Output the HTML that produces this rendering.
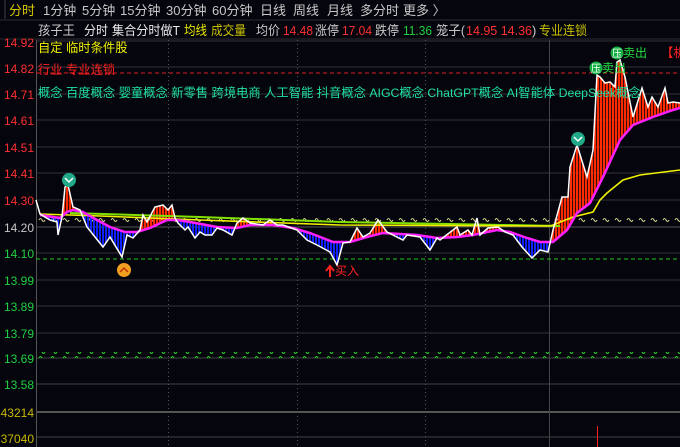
<!DOCTYPE html>
<html><head><meta charset="utf-8"><style>
html,body{margin:0;padding:0;background:#05050d;width:680px;height:447px;overflow:hidden}
svg{display:block}
text{font-family:"Liberation Sans","Noto Sans CJK SC",sans-serif}
</style></head><body>
<svg width="680" height="447" viewBox="0 0 680 447" xmlns="http://www.w3.org/2000/svg">
<defs>
<pattern id="rs" width="3" height="10" patternUnits="userSpaceOnUse"><rect width="2.2" height="10" fill="#ff2a00"/></pattern>
<pattern id="bs" width="3" height="10" patternUnits="userSpaceOnUse"><rect width="2" height="10" fill="#1020ff"/></pattern>
<pattern id="tY" x="38" y="0" width="12" height="6" patternUnits="userSpaceOnUse"><path d="M1,4 q1.5,-3 3,0 q1.5,3 3,0" stroke="#d8d890" stroke-width="1" fill="none"/></pattern>
<pattern id="tG" x="38" y="0" width="12" height="6" patternUnits="userSpaceOnUse"><path d="M1,4 q1.5,-3 3,0 q1.5,3 3,0" stroke="#20e020" stroke-width="1" fill="none"/></pattern>
<clipPath id="up"><polygon points="36,0 36,215 40,215 60,218 67,212 73,210 83,212 97,220 110,227 125,232 137,232 150,228 167,220 177,220 190,222 217,227 237,228 250,225 273,225 293,228 310,233 333,242 350,242 367,237 383,233 417,235 437,238 457,237 473,235 497,230 510,232 527,238 540,242 553,242 567,230 577,213 590,203 603,177 620,140 633,125 653,117 673,110 680,108 680,0"/></clipPath>
<clipPath id="dn"><polygon points="36,447 36,215 40,215 60,218 67,212 73,210 83,212 97,220 110,227 125,232 137,232 150,228 167,220 177,220 190,222 217,227 237,228 250,225 273,225 293,228 310,233 333,242 350,242 367,237 383,233 417,235 437,238 457,237 473,235 497,230 510,232 527,238 540,242 553,242 567,230 577,213 590,203 603,177 620,140 633,125 653,117 673,110 680,108 680,447"/></clipPath>
<polygon id="area" points="36,200 40,214 50,220 57,222 58,235 62,217 65,187 68,185 73,207 80,210 87,227 103,247 110,237 122,257 127,235 133,238 140,230 143,215 147,222 155,207 163,205 168,210 172,205 175,218 178,223 185,230 188,227 195,238 200,232 205,235 212,235 217,228 223,230 232,235 237,223 243,218 250,223 263,225 270,220 277,225 283,225 297,230 307,240 317,245 330,252 337,265 343,243 350,242 357,228 363,237 370,233 378,220 387,232 403,240 407,235 420,237 430,250 437,238 440,240 457,227 460,235 468,230 472,235 477,218 480,235 488,228 498,227 505,232 513,235 522,247 532,258 540,250 548,252 553,230 562,197 568,197 570,167 577,145 587,177 593,150 597,75 600,77 605,83 610,82 615,87 617,62 620,60 625,77 633,117 642,88 648,107 652,97 658,107 665,88 668,103 673,102 680,103 680,108 673,110 653,117 633,125 620,140 603,177 590,203 577,213 567,230 553,242 540,242 527,238 510,232 497,230 473,235 457,237 437,238 417,235 383,233 367,237 350,242 333,242 310,233 293,228 273,225 250,225 237,228 217,227 190,222 177,220 167,220 150,228 137,232 125,232 110,227 97,220 83,212 73,210 67,212 60,218 40,215"/>
</defs>
<!-- top tabs -->
<line x1="5" y1="0" x2="5" y2="19" stroke="#444"/>
<line x1="0" y1="20" x2="680" y2="20" stroke="#2a2a30"/>
<g font-size="13" fill="#c8c8c8">
<text x="9" y="15" fill="#d8c800">分时</text>
<text x="43" y="15">1分钟</text><text x="82" y="15">5分钟</text><text x="120" y="15">15分钟</text><text x="166" y="15">30分钟</text><text x="212" y="15">60分钟</text><text x="260" y="15">日线</text><text x="293" y="15">周线</text><text x="327" y="15">月线</text><text x="360" y="15">多分时</text><text x="403" y="15">更多 〉</text>
</g>
<!-- header -->
<g font-size="13" lengthAdjust="spacingAndGlyphs">
<text x="38" y="35" fill="#c8c8c8" textLength="37" lengthAdjust="spacingAndGlyphs">孩子王</text>
<text x="84" y="35" fill="#e8e8e8" textLength="24" lengthAdjust="spacingAndGlyphs">分时</text>
<text x="112" y="35" fill="#e8e8e8" textLength="68" lengthAdjust="spacingAndGlyphs">集合分时做T</text>
<text x="184" y="35" fill="#e8e800" textLength="23" lengthAdjust="spacingAndGlyphs">均线</text>
<text x="211" y="35" fill="#c8c000" textLength="35" lengthAdjust="spacingAndGlyphs">成交量</text>
<text x="256" y="35" fill="#c8c8c8" textLength="24" lengthAdjust="spacingAndGlyphs">均价</text>
<text x="283" y="35" fill="#ff3030" textLength="30" lengthAdjust="spacingAndGlyphs">14.48</text>
<text x="315" y="35" fill="#c8c8c8" textLength="24" lengthAdjust="spacingAndGlyphs">涨停</text>
<text x="342" y="35" fill="#ff3030" textLength="30" lengthAdjust="spacingAndGlyphs">17.04</text>
<text x="375" y="35" fill="#c8c8c8" textLength="24" lengthAdjust="spacingAndGlyphs">跌停</text>
<text x="403" y="35" fill="#20d040" textLength="29" lengthAdjust="spacingAndGlyphs">11.36</text>
<text x="436" y="35" fill="#c8c8c8" textLength="29" lengthAdjust="spacingAndGlyphs">笼子(</text>
<text x="466" y="35" fill="#ff3030" textLength="66" lengthAdjust="spacingAndGlyphs">14.95 14.36</text>
<text x="532" y="35" fill="#c8c8c8">)</text>
<text x="539" y="35" fill="#c8c000" textLength="48" lengthAdjust="spacingAndGlyphs">专业连锁</text>
</g>
<line x1="0" y1="39" x2="680" y2="39" stroke="#2a2a30"/>
<!-- grid -->
<g stroke="#333338" stroke-width="1">
<line x1="36" y1="41" x2="680" y2="41"/><line x1="36" y1="67" x2="680" y2="67"/><line x1="36" y1="94" x2="680" y2="94"/><line x1="36" y1="120" x2="680" y2="120"/><line x1="36" y1="147" x2="680" y2="147"/><line x1="36" y1="173" x2="680" y2="173"/><line x1="36" y1="200" x2="680" y2="200"/><line x1="36" y1="227" x2="680" y2="227" stroke="#555"/><line x1="36" y1="253" x2="680" y2="253"/><line x1="36" y1="280" x2="680" y2="280"/><line x1="36" y1="306" x2="680" y2="306"/><line x1="36" y1="333" x2="680" y2="333"/><line x1="36" y1="358" x2="680" y2="358" stroke="#444"/><line x1="36" y1="384" x2="680" y2="384" stroke="#444"/><line x1="36" y1="437" x2="680" y2="437" stroke="#444"/>
<line x1="36" y1="412" x2="680" y2="412" stroke="#555" stroke-width="2"/>
<line x1="36.5" y1="40" x2="36.5" y2="447" stroke="#555"/>
<line x1="549.5" y1="40" x2="549.5" y2="447" stroke="#444"/>
</g>
<g stroke="#555" stroke-dasharray="1,3"><line x1="168.5" y1="40" x2="168.5" y2="447"/><line x1="297.5" y1="40" x2="297.5" y2="447"/><line x1="425.5" y1="40" x2="425.5" y2="447"/></g>
<line x1="597.5" y1="426" x2="597.5" y2="447" stroke="#ff2020"/>
<!-- axis labels -->
<g font-size="12" text-anchor="end">
<g fill="#ff3030"><text x="34" y="47">14.92</text><text x="34" y="73">14.82</text><text x="34" y="99">14.71</text><text x="34" y="125">14.61</text><text x="34" y="152">14.51</text><text x="34" y="178">14.41</text><text x="34" y="205">14.30</text></g>
<text x="34" y="232" fill="#c8c8c8">14.20</text>
<g fill="#20d040"><text x="34" y="258">14.10</text><text x="34" y="285">13.99</text><text x="34" y="311">13.89</text><text x="34" y="338">13.79</text><text x="34" y="363">13.69</text><text x="34" y="389">13.58</text></g>
<g fill="#c8b800"><text x="34" y="417">43214</text><text x="34" y="443">37040</text></g>
</g>
<!-- dashed lines -->
<line x1="36" y1="73" x2="680" y2="73" stroke="#e02020" stroke-dasharray="4,3"/>
<line x1="36" y1="259" x2="680" y2="259" stroke="#20d020" stroke-dasharray="4,3"/>
<rect x="38" y="218" width="642" height="6" fill="url(#tY)"/>
<rect x="38" y="352" width="642" height="6" fill="url(#tG)"/>
<!-- fills -->
<use href="#area" clip-path="url(#up)" fill="url(#rs)"/>
<use href="#area" clip-path="url(#dn)" fill="url(#bs)"/>
<!-- lines -->
<polyline fill="none" stroke="#80e000" stroke-width="2" points="70,213 200,217 340,222 450,224 560,226"/>
<polyline fill="none" stroke="#f0f000" stroke-width="1.6" points="40,214 100,216 200,220 340,225 550,226 553,225 573,217 593,212 600,200 607,193 623,180 640,175 680,170"/>
<polyline fill="none" stroke="#ff20ff" stroke-width="2.5" points="40,215 60,218 67,212 73,210 83,212 97,220 110,227 125,232 137,232 150,228 167,220 177,220 190,222 217,227 237,228 250,225 273,225 293,228 310,233 333,242 350,242 367,237 383,233 417,235 437,238 457,237 473,235 497,230 510,232 527,238 540,242 553,242 567,230 577,213 590,203 603,177 620,140 633,125 653,117 673,110 680,108"/>
<polyline fill="none" stroke="#fff" stroke-width="1.5" points="36,200 40,214 50,220 57,222 58,235 62,217 65,187 68,185 73,207 80,210 87,227 103,247 110,237 122,257 127,235 133,238 140,230 143,215 147,222 155,207 163,205 168,210 172,205 175,218 178,223 185,230 188,227 195,238 200,232 205,235 212,235 217,228 223,230 232,235 237,223 243,218 250,223 263,225 270,220 277,225 283,225 297,230 307,240 317,245 330,252 337,265 343,243 350,242 357,228 363,237 370,233 378,220 387,232 403,240 407,235 420,237 430,250 437,238 440,240 457,227 460,235 468,230 472,235 477,218 480,235 488,228 498,227 505,232 513,235 522,247 532,258 540,250 548,252 553,230 562,197 568,197 570,167 577,145 587,177 593,150 597,75 600,77 605,83 610,82 615,87 617,62 620,60 625,77 633,117 642,88 648,107 652,97 658,107 665,88 668,103 673,102 680,103"/>
<!-- info text overlays -->
<g font-size="12.3">
<text x="38" y="52" fill="#f0f000">自定  临时条件股</text>
<text x="38" y="74" fill="#ff2020">行业 专业连锁</text>
<text x="38" y="97" fill="#20e0a0">概念 百度概念 婴童概念 新零售 跨境电商 人工智能 抖音概念 AIGC概念 ChatGPT概念 AI智能体 DeepSeek概念</text>
<text x="661" y="57" fill="#ff2020">【机</text>
</g>
<!-- markers -->
<g>
<circle cx="69" cy="180" r="7" fill="#20a888"/><path d="M65,178 l4,4 4,-4" stroke="#fff" stroke-width="1.5" fill="none"/>
<circle cx="578" cy="139" r="7" fill="#20a888"/><path d="M574,137 l4,4 4,-4" stroke="#fff" stroke-width="1.5" fill="none"/>
<circle cx="124" cy="270" r="7" fill="#f0a020"/><path d="M120,272 l4,-4 4,4" stroke="#c03000" stroke-width="1.5" fill="none"/>
<circle cx="596" cy="68" r="6.5" fill="#10b040"/><text x="591" y="72" font-size="10" fill="#fff">压</text><text x="602" y="72" font-size="12" fill="#20e040">卖出</text>
<circle cx="617" cy="53" r="6.5" fill="#10b040"/><text x="612" y="57" font-size="10" fill="#fff">压</text><text x="623" y="57" font-size="12" fill="#20e040">卖出</text>
<path d="M330,277 v-10 M326,271 l4,-5 4,5" stroke="#ff2020" stroke-width="2" fill="none"/><text x="335" y="275" font-size="12" fill="#ff2020">买入</text>
</g>
</svg>
</body></html>
